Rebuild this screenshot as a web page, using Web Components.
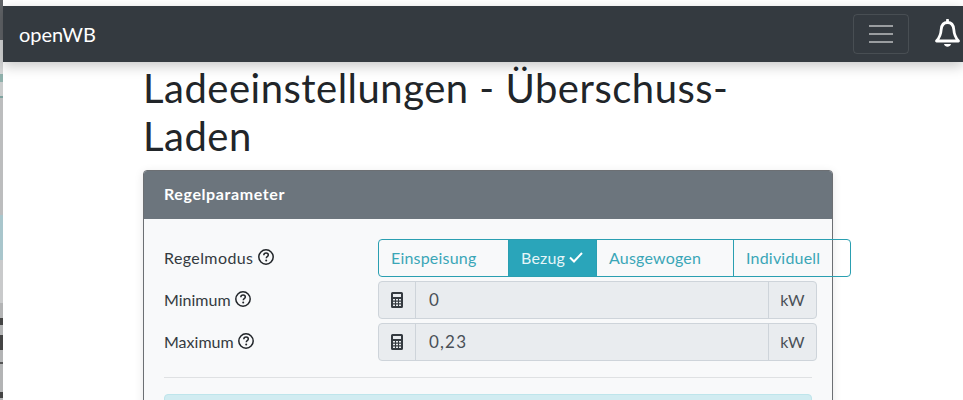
<!DOCTYPE html>
<html lang="de">
<head>
<meta charset="utf-8">
<title>openWB</title>
<style>
    html, body {
        margin: 0;
        height: 100%;
        overflow: hidden;
        background: #fff;
    }

    body {
        font-family: Lato, "Open Sans", sans-serif;
        color: #212529;
    }
</style>
</head>
<body>
<owb-page>
    <owb-navbar slot="nav" brand="openWB"></owb-navbar>
    <owb-card heading="Regelparameter">
        <owb-row label="Regelmodus" style="--label-spacing: .4px">
            <owb-button-group active="Bezug" options="Einspeisung:131,Bezug:89,Ausgewogen:138,Individuell:118"></owb-button-group>
        </owb-row>
        <owb-row label="Minimum">
            <owb-number-input value="0" unit="kW"></owb-number-input>
        </owb-row>
        <owb-row label="Maximum">
            <owb-number-input value="0,23" unit="kW"></owb-number-input>
        </owb-row>
    </owb-card>
</owb-page>

<script>
class OwbPage extends HTMLElement {
    constructor() {
        super();
        this.attachShadow({ mode: 'open' });
    }

    connectedCallback() {
        this.shadowRoot.innerHTML = `
            <style>
            :host {
                display: flex;
                height: 400px;
                overflow: hidden;
            }

            /* piece of the window behind, at the left edge */
            .edge {
                flex: 0 0 3px;
                background: linear-gradient(to bottom,
                    #606367 0, #606367 40px, #d4d5d6 40px, #d4d5d6 74px,
                    #8fb0ab 74px, #8fb0ab 82px, #cacccc 82px, #cacccc 96px,
                    #7fa39f 96px, #7fa39f 98px, #bcbdbe 98px, #bcbdbe 215px,
                    #a9c6cc 215px, #a9c6cc 260px, #c9cacb 260px, #c9cacb 303px,
                    #b3b4b5 303px, #b3b4b5 318px, #444 318px, #444 325px,
                    #b3b4b5 325px, #b3b4b5 335px, #444 335px, #444 350px,
                    #b3b4b5 350px, #b3b4b5 362px, #555 362px, #555 364px,
                    #b3b4b5 364px, #b3b4b5 392px, #444 392px, #444 398px,
                    #b3b4b5 398px);
            }

            .main {
                flex: 1;
                min-width: 0;
                padding-top: 6px;
            }

            .content {
                width: 690px;
                margin-left: 140px;
            }

            h1 {
                max-width: 620px;
                margin: 0 0 10px;
                padding-top: 2px;
                font-size: 40px;
                font-weight: 400;
                line-height: 48px;
                letter-spacing: .5px;
            }
            </style>
            <div class="edge"></div>
            <div class="main">
                <slot name="nav"></slot>
                <div class="content">
                    <h1>Ladeeinstellungen - Überschuss-Laden</h1>
                    <slot></slot>
                </div>
            </div>
        `;
    }
}

class OwbNavbar extends HTMLElement {
    constructor() {
        super();
        this.attachShadow({ mode: 'open' });
    }

    connectedCallback() {
        this.shadowRoot.innerHTML = `
            <style>
            :host {
                display: flex;
                align-items: center;
                height: 56px;
                padding: 0 0 0 16px;
                background: #343a40;
                box-shadow: 0 4px 12px rgba(0, 0, 0, .22);
                position: relative;
            }

            .brand {
                flex: 1;
                color: #fff;
                font-size: 20px;
            }

            .toggler {
                box-sizing: border-box;
                display: flex;
                align-items: center;
                justify-content: center;
                width: 56px;
                height: 40px;
                border: 1px solid rgba(255, 255, 255, .1);
                border-radius: 4px;
            }

            .bell {
                display: block;
                margin: 0 2px 0 25px;
            }
            </style>
            <span class="brand">${this.getAttribute('brand')}</span>
            <span class="toggler">
                <svg width="24" height="24" viewBox="0 0 24 24" fill="none" stroke="rgba(255,255,255,.5)" stroke-width="2">
                    <path d="M0 4h24M0 12h24M0 20h24" />
                </svg>
            </span>
            <svg class="bell" width="27" height="30" viewBox="0 0 27 30" fill="none" stroke="#fff" stroke-width="2.800" stroke-linejoin="round">
                <path d="M13.500 3.500c-4.300 0-6 3.200-6.300 7-.3 4.500-1 7.500-4.700 11.500h22c-3.700-4-4.400-7-4.700-11.500-.3-3.800-2-7-6.300-7z" />
                <path d="M13.500 1v2.500" stroke-linecap="round" />
                <path d="M10 25h7c-.4 1.700-1.900 2.800-3.500 2.800S10.400 26.700 10 25z" fill="#fff" stroke="none" />
            </svg>
        `;
    }
}

class OwbCard extends HTMLElement {
    constructor() {
        super();
        this.attachShadow({ mode: 'open' });
    }

    connectedCallback() {
        this.shadowRoot.innerHTML = `
            <style>
            :host {
                display: block;
                box-sizing: border-box;
                height: 300px;
                border: 1px solid #6c6f73;
                border-radius: 4px;
                background: #f8f9fa;
                box-shadow: 0 2px 10px rgba(0, 0, 0, .1);
            }

            .header {
                box-sizing: border-box;
                height: 48px;
                padding: 0 20px 3px;
                display: flex;
                align-items: center;
                background: #6c757d;
                color: #fff;
                font-size: 16px;
                font-weight: 700;
                letter-spacing: .6px;
                border-radius: 3px 3px 0 0;
            }

            .body {
                padding: 20px 20px 0;
            }

            hr {
                margin: 16px 0 16px;
                border: 0;
                border-top: 1px solid #dfe1e3;
            }

            .alert {
                height: 60px;
                background: #d1ecf1;
                border: 1px solid #bee5eb;
                border-radius: 4px;
                box-sizing: border-box;
            }
            </style>
            <div class="header">${this.getAttribute('heading')}</div>
            <div class="body">
                <slot></slot>
                <hr>
                <div class="alert"></div>
            </div>
        `;
    }
}

class OwbRow extends HTMLElement {
    constructor() {
        super();
        this.attachShadow({ mode: 'open' });
    }

    connectedCallback() {
        this.shadowRoot.innerHTML = `
            <style>
            :host {
                display: grid;
                grid-template-columns: 214px 439px;
                align-items: center;
                margin-bottom: 4px;
                margin-right: -4px;
                font-size: 16px;
                color: #343a40;
            }

            label {
                display: flex;
                align-items: center;
                gap: 4.500px;
                padding-bottom: 2px;
                letter-spacing: var(--label-spacing, 0);
            }

            svg {
                display: block;
            }
            </style>
            <label>
                <span>${this.getAttribute('label')}</span>
                <svg width="16" height="16" viewBox="0 0 16 16">
                    <circle cx="8" cy="8" r="7.200" fill="none" stroke="#212529" stroke-width="1.500" />
                    <path d="M5.800 6.200c.1-1.400 1-2.100 2.300-2.100 1.300 0 2.200.8 2.200 1.900 0 .9-.5 1.300-1.100 1.700-.6.400-.9.700-.9 1.500" fill="none" stroke="#212529" stroke-width="1.500" />
                    <circle cx="8.200" cy="11.600" r="1" fill="#212529" />
                </svg>
            </label>
            <slot></slot>
        `;
    }
}

class OwbButtonGroup extends HTMLElement {
    constructor() {
        super();
        this.attachShadow({ mode: 'open' });
    }

    connectedCallback() {
        const active = this.getAttribute('active');
        const buttons = this.getAttribute('options').split(',').map((option) => {
            const [name, width] = option.split(':');
            const isActive = name === active;
            return `<span class="btn ${isActive ? 'active' : ''}" style="width:${width}px">${name}${isActive ? `
                <svg width="14" height="12" viewBox="0 0 14 12" fill="none" stroke="#fff" stroke-width="2"><path d="M1 6.500l4 4L13 2" /></svg>` : ''}</span>`;
        }).join('');

        this.shadowRoot.innerHTML = `
            <style>
            :host {
                display: flex;
                width: max-content;
                height: 38px;
            }

            .btn {
                box-sizing: border-box;
                display: flex;
                align-items: center;
                gap: 4px;
                padding: 0 0 2px 12px;
                border: 1px solid #2a9fb1;
                margin-left: -1px;
                color: #3aa6b7;
                font-size: 16px;
                letter-spacing: .2px;
                white-space: nowrap;
            }

            .btn:first-of-type {
                margin-left: 0;
                border-radius: 4px 0 0 4px;
            }

            .btn:last-of-type {
                border-radius: 0 4px 4px 0;
            }

            .active {
                background: #2aa5ba;
                color: #e6f5f8;
            }
            </style>
            ${buttons}
        `;
    }
}

class OwbNumberInput extends HTMLElement {
    constructor() {
        super();
        this.attachShadow({ mode: 'open' });
    }

    connectedCallback() {
        this.shadowRoot.innerHTML = `
            <style>
            :host {
                display: flex;
                box-sizing: border-box;
                height: 38px;
                border: 1px solid #ced4da;
                border-radius: 4px;
                background: #e9ecef;
                color: #495057;
                font-size: 16px;
            }

            .icon {
                flex: 0 0 36px;
                display: flex;
                align-items: center;
                justify-content: center;
                border-right: 1px solid #ced4da;
            }

            .value {
                flex: 1;
                display: flex;
                align-items: center;
                padding: 0 0 2px 13px;
                font-size: 17px;
                letter-spacing: 1.200px;
            }

            .unit {
                flex: 0 0 47px;
                display: flex;
                align-items: center;
                justify-content: center;
                padding-bottom: 2px;
                border-left: 1px solid #ced4da;
            }
            </style>
            <span class="icon">
                <svg width="12" height="16" viewBox="0 0 12 16">
                    <path fill-rule="evenodd" fill="#343a40" d="M1.500 0h9A1.500 1.500 0 0 1 12 1.500v13a1.500 1.500 0 0 1-1.500 1.500h-9A1.500 1.500 0 0 1 0 14.500v-13A1.500 1.500 0 0 1 1.500 0zM2 2v3h8V2zM2 7v1.500h2V7zM5 7v1.500h2V7zM8 7v1.500h2V7zM2 9.700v1.500h2V9.700zM5 9.700v1.500h2V9.700zM8 9.700v1.500h2V9.700zM2 12.400v1.500h2v-1.500zM5 12.400v1.500h2v-1.500zM8 12.400v1.500h2v-1.500z" />
                </svg>
            </span>
            <span class="value">${this.getAttribute('value')}</span>
            <span class="unit">${this.getAttribute('unit')}</span>
        `;
    }
}

customElements.define('owb-page', OwbPage);
customElements.define('owb-navbar', OwbNavbar);
customElements.define('owb-card', OwbCard);
customElements.define('owb-row', OwbRow);
customElements.define('owb-button-group', OwbButtonGroup);
customElements.define('owb-number-input', OwbNumberInput);
</script>
</body>
</html>
